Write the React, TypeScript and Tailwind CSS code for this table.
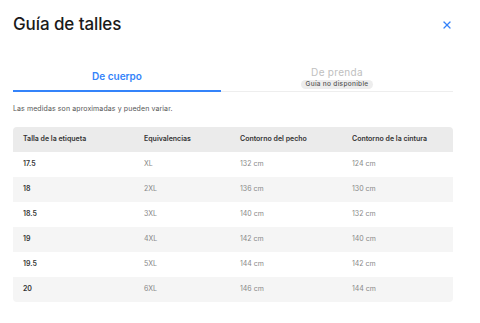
import { X } from "lucide-react";

const rows = [
  { size: "17.5", eq: "XL", chest: "132 cm", waist: "124 cm" },
  { size: "18", eq: "2XL", chest: "136 cm", waist: "130 cm" },
  { size: "18.5", eq: "3XL", chest: "140 cm", waist: "132 cm" },
  { size: "19", eq: "4XL", chest: "142 cm", waist: "140 cm" },
  { size: "19.5", eq: "5XL", chest: "144 cm", waist: "142 cm" },
  { size: "20", eq: "6XL", chest: "146 cm", waist: "144 cm" },
];

const cols = "grid grid-cols-[121px_96px_112px_1fr] pl-[10px]";

export default function App() {
  return (
    <div className="w-[480px] h-[323px] bg-white pl-[13px] pr-[27px] pt-[13px] font-['Inter',sans-serif] text-[#1a1a1a] overflow-hidden">
      {/* Header */}
      <div className="flex items-center justify-between h-[24px]">
        <h1 className="text-[17px] font-medium tracking-[-0.1px]">Guía de talles</h1>
        <button className="text-[#3483fa]">
          <X size={12} strokeWidth={2.5} />
        </button>
      </div>

      {/* Tabs */}
      <div className="flex mt-[27px]">
        <div className="w-[208px] h-[28px] flex items-start justify-center border-b-2 border-[#3483fa]">
          <span className="text-[10px] font-semibold text-[#3483fa] mt-[5px]">De cuerpo</span>
        </div>
        <div className="flex-1 h-[28px] flex flex-col items-center border-b border-[#eeeeee]">
          <span className="text-[10px] text-[#c0c0c0] leading-[12px] mt-[2px] tracking-[0.3px]">De prenda</span>
          <span className="mt-[2px] px-[5px] rounded-full bg-[#ededed] text-[6.5px] font-medium text-[#555] leading-[9px] h-[9px] tracking-[0.3px]">
            Guía no disponible
          </span>
        </div>
      </div>

      <p className="mt-[12px] text-[7px] text-[#555] tracking-[0.1px]">Las medidas son aproximadas y pueden variar.</p>

      {/* Table */}
      <div className="mt-[12px] rounded-[4px] overflow-hidden">
        <div className={`${cols} h-[25px] items-center bg-[#ebebeb] text-[7px] font-semibold text-[#333]`}>
          <span>Talla de la etiqueta</span>
          <span>Equivalencias</span>
          <span>Contorno del pecho</span>
          <span>Contorno de la cintura</span>
        </div>
        {rows.map((r, i) => (
          <div
            key={r.size}
            className={`${cols} h-[25px] items-center text-[7px] ${i % 2 === 1 ? "bg-[#f5f5f5]" : "bg-white"}`}
          >
            <span className="font-semibold text-[#333]">{r.size}</span>
            <span className="text-[#888]">{r.eq}</span>
            <span className="text-[#888]">{r.chest}</span>
            <span className="text-[#888]">{r.waist}</span>
          </div>
        ))}
      </div>
    </div>
  );
}
